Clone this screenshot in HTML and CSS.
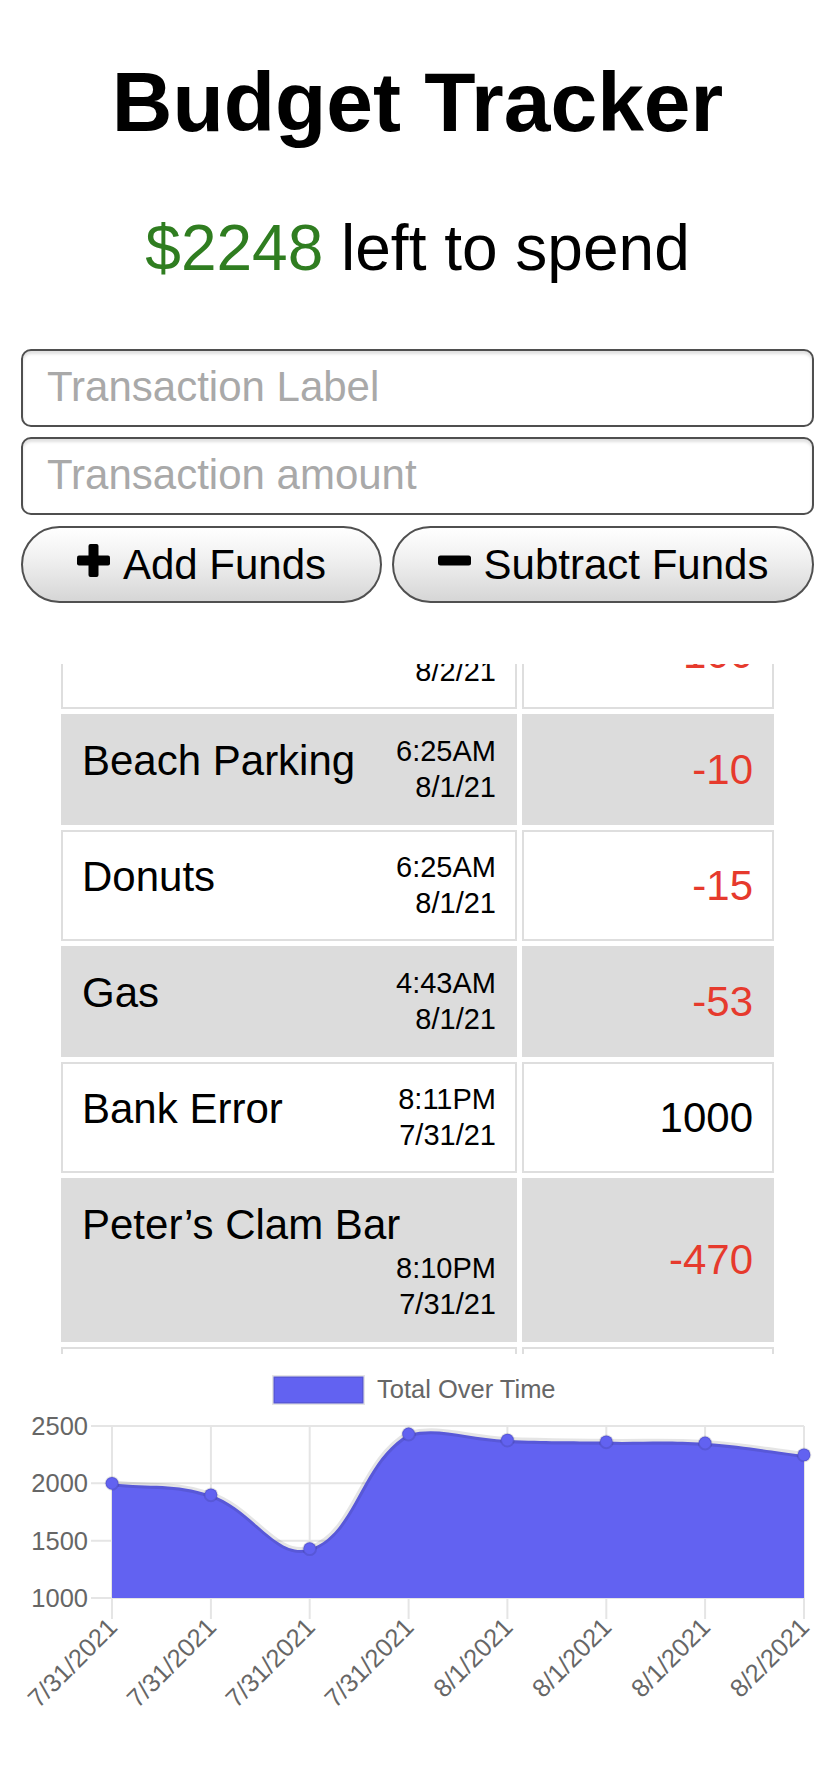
FILE: index.html
```html
<!DOCTYPE html>
<html lang="en">
<head>
<meta charset="utf-8">
<title>Budget Tracker</title>
<link rel="stylesheet" href="styles.css">
</head>
<body>
<h1 class="title">Budget Tracker</h1>
<p class="balance"><span class="balance-amount">$2248</span> left to spend</p>

<form class="entry">
  <input class="field" type="text" placeholder="Transaction Label">
  <input class="field" type="text" placeholder="Transaction amount">
  <div class="actions">
    <button type="button" class="btn">
      <svg class="btn-icon" viewBox="0 0 33 33" width="33" height="33"><rect x="0" y="11.5" width="33" height="10" rx="2"/><rect x="11.5" y="0" width="10" height="33" rx="2"/></svg>
      <span>Add Funds</span>
    </button>
    <button type="button" class="btn">
      <svg class="btn-icon" viewBox="0 0 33 33" width="33" height="33"><rect x="0" y="11.5" width="33" height="10" rx="2.5"/></svg>
      <span>Subtract Funds</span>
    </button>
  </div>
</form>

<div class="ledger-window">
  <div class="ledger">
    <div class="cell name-cell"><span class="label">Snacks</span><span class="when">9:02AM<br>8/2/21</span></div>
    <div class="cell amount-cell neg">-100</div>

    <div class="cell name-cell alt"><span class="label">Beach Parking</span><span class="when">6:25AM<br>8/1/21</span></div>
    <div class="cell amount-cell alt neg">-10</div>

    <div class="cell name-cell"><span class="label">Donuts</span><span class="when">6:25AM<br>8/1/21</span></div>
    <div class="cell amount-cell neg">-15</div>

    <div class="cell name-cell alt"><span class="label">Gas</span><span class="when">4:43AM<br>8/1/21</span></div>
    <div class="cell amount-cell alt neg">-53</div>

    <div class="cell name-cell"><span class="label">Bank Error</span><span class="when">8:11PM<br>7/31/21</span></div>
    <div class="cell amount-cell">1000</div>

    <div class="cell name-cell alt"><span class="label">Peter’s Clam Bar</span><span class="when">8:10PM<br>7/31/21</span></div>
    <div class="cell amount-cell alt neg">-470</div>

    <div class="cell name-cell"><span class="label">Groceries</span><span class="when">7:45PM<br>7/31/21</span></div>
    <div class="cell amount-cell neg">-100</div>
  </div>
</div>

<svg class="chart" viewBox="0 0 835 414" width="835" height="414">
  <!-- legend -->
  <rect class="legend-box" x="273.5" y="22.5" width="90" height="27"/>
  <text class="chart-text" x="377" y="44">Total Over Time</text>

  <!-- grid -->
  <g class="grid">
    <line x1="91" y1="72" x2="804" y2="72"/>
    <line x1="91" y1="129.3" x2="804" y2="129.3"/>
    <line x1="91" y1="186.7" x2="804" y2="186.7"/>
    <line x1="91" y1="244" x2="804" y2="244"/>
    <line x1="112" y1="72" x2="112" y2="265"/>
    <line x1="210.9" y1="72" x2="210.9" y2="265"/>
    <line x1="309.7" y1="72" x2="309.7" y2="265"/>
    <line x1="408.6" y1="72" x2="408.6" y2="265"/>
    <line x1="507.4" y1="72" x2="507.4" y2="265"/>
    <line x1="606.3" y1="72" x2="606.3" y2="265"/>
    <line x1="705.1" y1="72" x2="705.1" y2="265"/>
    <line x1="804" y1="72" x2="804" y2="265"/>
  </g>

  <!-- y labels -->
  <text class="chart-text y-label" x="88" y="81">2500</text>
  <text class="chart-text y-label" x="88" y="138.3">2000</text>
  <text class="chart-text y-label" x="88" y="195.7">1500</text>
  <text class="chart-text y-label" x="88" y="253">1000</text>

  <!-- data -->
  <path class="area" d="M112,129.3 C151.6,133.9 173.8,128.5 210.9,140.8 C252.9,154.7 276,205.1 309.7,194.7 C355.1,180.8 360.8,106.3 408.6,80 C439.9,72 467.8,84.5 507.4,86.1 C546.9,87.7 566.8,87.2 606.3,87.8 C645.8,88.4 665.7,86.4 705.1,89 C744.8,91.6 764.4,96.1 804,100.9 L804,244 L112,244 Z"/>
  <path class="area-line" d="M112,129.3 C151.6,133.9 173.8,128.5 210.9,140.8 C252.9,154.7 276,205.1 309.7,194.7 C355.1,180.8 360.8,106.3 408.6,80 C439.9,72 467.8,84.5 507.4,86.1 C546.9,87.7 566.8,87.2 606.3,87.8 C645.8,88.4 665.7,86.4 705.1,89 C744.8,91.6 764.4,96.1 804,100.9"/>
  <g class="points">
    <circle cx="112" cy="129.3" r="6.4"/>
    <circle cx="210.9" cy="140.8" r="6.4"/>
    <circle cx="309.7" cy="194.7" r="6.4"/>
    <circle cx="408.6" cy="80" r="6.4"/>
    <circle cx="507.4" cy="86.1" r="6.4"/>
    <circle cx="606.3" cy="87.8" r="6.4"/>
    <circle cx="705.1" cy="89" r="6.4"/>
    <circle cx="804" cy="100.9" r="6.4"/>
  </g>

  <!-- x labels -->
  <text class="chart-text x-label" transform="translate(114,270) rotate(-45)">7/31/2021</text>
  <text class="chart-text x-label" transform="translate(212.9,270) rotate(-45)">7/31/2021</text>
  <text class="chart-text x-label" transform="translate(311.7,270) rotate(-45)">7/31/2021</text>
  <text class="chart-text x-label" transform="translate(410.6,270) rotate(-45)">7/31/2021</text>
  <text class="chart-text x-label" transform="translate(509.4,270) rotate(-45)">8/1/2021</text>
  <text class="chart-text x-label" transform="translate(608.3,270) rotate(-45)">8/1/2021</text>
  <text class="chart-text x-label" transform="translate(707.1,270) rotate(-45)">8/1/2021</text>
  <text class="chart-text x-label" transform="translate(806,270) rotate(-45)">8/2/2021</text>
</svg>
</body>
</html>
```

FILE: styles.css
```css
html, body {
  margin: 0;
  padding: 0;
  background: #ffffff;
}

body {
  width: 835px;
  font-family: "Liberation Sans", Arial, Helvetica, sans-serif;
  color: #000000;
}

.title {
  margin: 54px 0 0;
  font-size: 84px;
  line-height: 96px;
  font-weight: bold;
  text-align: center;
}

.balance {
  margin: 61px 0 0;
  font-size: 64px;
  line-height: 74px;
  text-align: center;
}

.balance-amount {
  color: #2f7d20;
}

.entry {
  margin: 64px 0 0;
  padding: 0 21px;
  display: flex;
  flex-direction: column;
  gap: 10px;
}

.field {
  box-sizing: border-box;
  width: 100%;
  height: 78px;
  margin: 0;
  padding: 0 20px 3px 24px;
  border: 2px solid #4f4f4f;
  border-radius: 10px;
  background: #ffffff;
  box-shadow: inset 0 3px 3px rgba(0, 0, 0, 0.12);
  font-family: "Liberation Sans", Arial, Helvetica, sans-serif;
  font-size: 42px;
  color: #000;
  outline: none;
}

.field::placeholder {
  color: #a9a9a9;
}

.actions {
  margin-top: 1px;
  display: grid;
  grid-template-columns: 361fr 422fr;
  gap: 10px;
}

.btn {
  box-sizing: border-box;
  height: 77px;
  margin: 0;
  padding: 0;
  display: flex;
  align-items: center;
  justify-content: center;
  gap: 13px;
  border: 2px solid #505050;
  border-radius: 39px;
  background: linear-gradient(#ffffff 0%, #f1f1f1 40%, #d6d6d6 100%);
  font-family: "Liberation Sans", Arial, Helvetica, sans-serif;
  font-size: 42px;
  color: #000;
}

.btn-icon {
  display: block;
  margin-bottom: 8px;
  fill: #000;
}

.ledger-window {
  margin-top: 61px;
  height: 690px;
  overflow: hidden;
}

.ledger {
  margin: -66px auto 0;
  width: 713px;
  display: grid;
  grid-template-columns: 456px 252px;
  gap: 5px;
}

.cell {
  box-sizing: border-box;
  border: 2px solid #dedede;
  background: #ffffff;
}

.cell.alt {
  background: #dcdcdc;
  border-color: #dcdcdc;
}

.name-cell {
  padding: 17px 19px 18px;
  display: flex;
  flex-wrap: wrap;
  justify-content: space-between;
  align-items: flex-start;
}

.label {
  padding-top: 3px;
  font-size: 42px;
  line-height: 50px;
  white-space: nowrap;
}

.when {
  margin-left: auto;
  font-size: 29px;
  line-height: 36px;
  text-align: right;
  white-space: nowrap;
}

.amount-cell {
  padding: 0 19px;
  display: flex;
  align-items: center;
  justify-content: flex-end;
  font-size: 42px;
  line-height: 48px;
}

.amount-cell.neg {
  color: #e63a2d;
}

.chart {
  display: block;
}

.chart-text {
  font-family: "Liberation Sans", Arial, Helvetica, sans-serif;
  font-size: 25.5px;
  fill: #666666;
}

.y-label {
  text-anchor: end;
}

.x-label {
  text-anchor: end;
  dominant-baseline: middle;
}

.legend-box {
  fill: #6262f1;
  stroke: rgba(0, 0, 0, 0.1);
  stroke-width: 3;
}

.grid line {
  stroke: #e5e5e5;
  stroke-width: 2;
}

.area {
  fill: #6262f1;
}

.area-line {
  fill: none;
  stroke: rgba(0, 0, 0, 0.1);
  stroke-width: 6;
}

.points circle {
  fill: #6262f1;
  stroke: rgba(0, 0, 0, 0.1);
  stroke-width: 2;
}
```
